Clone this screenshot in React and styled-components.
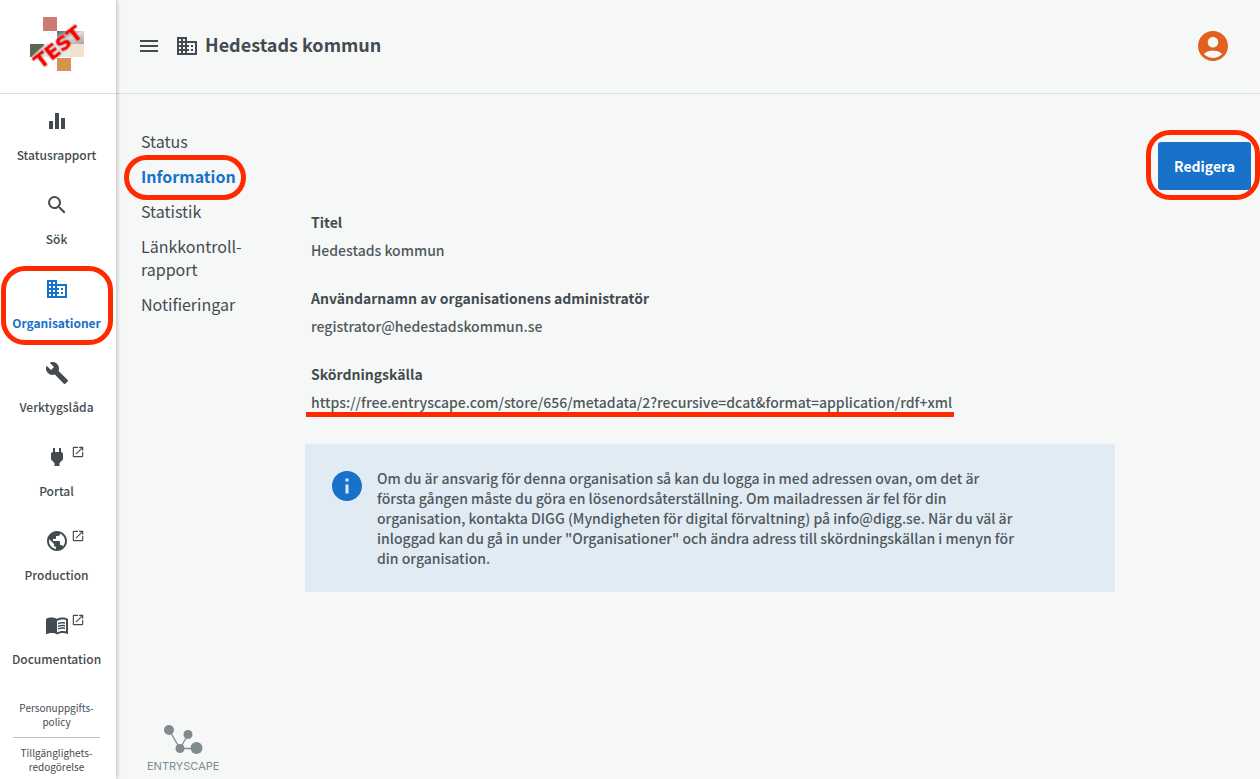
import React from 'react';
import styled, { createGlobalStyle } from 'styled-components';
import {
    MdAccountCircle,
    MdBuild,
    MdBusiness,
    MdEqualizer,
    MdInfo,
    MdMenu,
    MdMenuBook,
    MdOpenInNew,
    MdPower,
    MdPublic,
    MdSearch,
} from 'react-icons/md';

const textColor = '#444b50';
const softTextColor = '#51585c';
const blue = '#1872ca';
const red = '#ff2a00';

const GlobalStyle = createGlobalStyle`
    * {
        box-sizing: border-box;
    }

    body {
        margin: 0;
        background-color: #f6f8f7;
        color: ${textColor};
        font-family: 'Noto Sans CJK SC', 'Noto Sans', sans-serif;
        font-size: 14px;
        line-height: 20px;
    }

    a {
        color: inherit;
        text-decoration: none;
    }

    svg {
        display: block;
    }
`;

const Page = styled.div`
    display: flex;
    min-height: 100vh;
`;

const Sidebar = styled.aside`
    position: relative;
    flex: 0 0 116px;
    background-color: #fff;
    box-shadow: 0 0 5px rgba(0, 0, 0, .35);
`;

const LogoLink = styled.a`
    display: flex;
    justify-content: center;
    height: 94px;
    padding-top: 16px;
    border-bottom: 1px solid #dcdfdf;
`;

const Ring = styled.span`
    position: absolute;
    inset: ${props => props.inset};
    border: 5px solid ${red};
    border-radius: ${props => props.radius};
    pointer-events: none;
`;

const NavItem = styled.a`
    position: relative;
    display: flex;
    flex-direction: column;
    align-items: center;
    gap: 12px;
    height: 84px;
    padding: 15px 3px 0 0;
    font-size: 12px;
    font-weight: ${props => props.$active ? 'bold' : '500'};
    color: ${props => props.$active ? blue : 'inherit'};
    white-space: nowrap;
`;

const NavIcon = styled.span`
    position: relative;
`;

const ExternalMark = styled.span`
    position: absolute;
    top: 0;
    left: 26px;
`;

const Policies = styled.div`
    margin: 19px 16px 4px 13px;
    font-size: 10px;
    line-height: 14px;
    text-align: center;
`;

const PolicyLink = styled.a`
    display: block;

    & + & {
        margin-top: 8px;
        padding-top: 8px;
        border-top: 1px solid #bfc3c4;
    }
`;

const Main = styled.div`
    display: flex;
    flex: 1;
    flex-direction: column;
    min-width: 0;
`;

const Header = styled.header`
    display: flex;
    align-items: center;
    height: 94px;
    padding: 0 29px 2px 21px;
    border-bottom: 1px solid #dcdfdf;
`;

const IconButton = styled.button`
    padding: 0;
    border: 0;
    background: none;
    color: ${props => props.color || 'inherit'};
    cursor: pointer;
`;

const Heading = styled.h1`
    display: flex;
    flex: 1;
    align-items: center;
    gap: 6px;
    margin: 0 0 0 14px;
    font-size: 18px;
    line-height: 24px;

    span {
        padding-bottom: 4px;
    }
`;

const Body = styled.div`
    display: flex;
    align-items: flex-start;
    padding: 36px 9px 0 25px;
`;

const SubNav = styled.nav`
    display: flex;
    flex: 0 0 164px;
    flex-direction: column;
    align-items: flex-start;
    gap: 12px;
    font-size: 16px;
    line-height: 23px;
`;

const SubNavLink = styled.a`
    position: relative;
    color: ${props => props.$active ? blue : 'inherit'};
    font-weight: ${props => props.$active ? 'bold' : 'normal'};
`;

const Content = styled.main`
    flex: 1;
    min-width: 0;
    padding-top: 82px;
    font-weight: 500;
`;

const Details = styled.dl`
    display: flex;
    flex-direction: column;
    gap: 28px;
    margin: 0 0 32px;
    padding-left: 6px;
`;

const Label = styled.dt`
    font-weight: bold;
`;

const Value = styled.dd`
    position: relative;
    width: fit-content;
    margin: 8px 0 0;
    color: ${softTextColor};
`;

const Underline = styled.span`
    position: absolute;
    right: -2px;
    bottom: -5px;
    left: -5px;
    height: 5px;
    background-color: ${red};
`;

const InfoBox = styled.div`
    display: flex;
    gap: 12px;
    padding: 24px;
    background-color: #e1ebf4;
    color: ${softTextColor};

    svg {
        flex: none;
        color: ${blue};
    }

    p {
        max-width: 640px;
        margin: 0;
    }
`;

const Actions = styled.div`
    position: relative;
    margin: 12px 0 0 43px;
`;

const EditButton = styled.button`
    display: block;
    width: 93px;
    height: 48px;
    border: 0;
    border-radius: 3px;
    background-color: ${blue};
    color: #fff;
    font-family: inherit;
    font-size: 14px;
    font-weight: bold;
    cursor: pointer;
`;

const Footer = styled.footer`
    margin-top: auto;
    padding: 0 0 6px 31px;
`;

const Brand = styled.a`
    display: inline-flex;
    flex-direction: column;
    align-items: center;
    color: #7f8b8e;
    font-family: Inter, sans-serif;
    font-size: 11px;
    line-height: 14px;
`;

const navItems = [
    { label: 'Statusrapport', icon: MdEqualizer },
    { label: 'Sök', icon: MdSearch },
    { label: 'Organisationer', icon: MdBusiness, active: true },
    { label: 'Verktygslåda', icon: MdBuild },
    { label: 'Portal', icon: MdPower, external: true },
    { label: 'Production', icon: MdPublic, external: true },
    { label: 'Documentation', icon: MdMenuBook, external: true },
];

const TestLogo = () => (
    <svg width="60" height="58" viewBox="0 0 60 58" role="img" aria-label="TEST">
        <defs>
            <linearGradient id="grey" x1="0" y1="0" x2="1" y2="1">
                <stop offset="0" stopColor="#5f5a59" />
                <stop offset=".5" stopColor="#ddd" />
                <stop offset="1" stopColor="#aaa3a3" />
            </linearGradient>
            <linearGradient id="green" x1="0" y1="0" x2="1" y2="1">
                <stop offset=".5" stopColor="#5b684d" />
                <stop offset=".6" stopColor="#d8dad5" />
            </linearGradient>
            <filter id="glow" x="-20%" y="-40%" width="140%" height="180%">
                <feDropShadow dx="0" dy="0" stdDeviation="1" floodColor="#777" floodOpacity=".6" />
            </filter>
        </defs>
        <rect x="15" y="1" width="14" height="14" fill="#cc7b70" />
        <rect x="29" y="15" width="27" height="13" fill="url(#grey)" />
        <rect x="2" y="28" width="14" height="13" fill="url(#green)" />
        <rect x="16" y="28" width="26" height="13" fill="#e9e9e9" />
        <rect x="42" y="28" width="14" height="13" fill="#f4e0cf" />
        <rect x="29" y="42" width="14" height="13" fill="#d69351" />
        <text
            x="30"
            y="38"
            textAnchor="middle"
            transform="rotate(-38 30 31)"
            fill="#f90000"
            stroke="#f90000"
            strokeWidth=".3"
            filter="url(#glow)"
            fontFamily="DejaVu Sans, sans-serif"
            fontSize="20"
            fontWeight="bold"
        >
            TEST
        </text>
    </svg>
);

const EntryscapeLogo = () => (
    <svg width="40" height="35" viewBox="0 0 40 35" fill="#7f8b8e" aria-hidden="true">
        <path d="M6 6l11 18.500h17M17 24.500l8-14" fill="none" stroke="#7f8b8e" strokeWidth="1.300" />
        <circle cx="6" cy="6" r="5" />
        <circle cx="25" cy="10.500" r="4.500" />
        <circle cx="17" cy="24.500" r="4.500" />
        <circle cx="33.500" cy="24" r="6" />
    </svg>
);

export default function App() {
    return (
        <Page>
            <GlobalStyle />
            <Sidebar>
                <LogoLink href="#">
                    <TestLogo />
                </LogoLink>
                <nav>
                    {navItems.map(({ label, icon: Icon, active, external }) => (
                        <NavItem key={label} href="#" $active={active}>
                            <NavIcon>
                                <Icon size={24} />
                                {external && (
                                    <ExternalMark>
                                        <MdOpenInNew size={14} />
                                    </ExternalMark>
                                )}
                            </NavIcon>
                            {label}
                            {active && <Ring inset="4px 3px 1px 1px" radius="24px" />}
                        </NavItem>
                    ))}
                </nav>
                <Policies>
                    <PolicyLink href="#">Personuppgifts-<br />policy</PolicyLink>
                    <PolicyLink href="#">Tillgänglighets-<br />redogörelse</PolicyLink>
                </Policies>
            </Sidebar>
            <Main>
                <Header>
                    <IconButton aria-label="Meny">
                        <MdMenu size={24} />
                    </IconButton>
                    <Heading>
                        <MdBusiness size={24} />
                        <span>Hedestads kommun</span>
                    </Heading>
                    <IconButton color="#e1611f" aria-label="Konto">
                        <MdAccountCircle size={36} />
                    </IconButton>
                </Header>
                <Body>
                    <SubNav>
                        <SubNavLink href="#">Status</SubNavLink>
                        <SubNavLink href="#" $active>
                            Information
                            <Ring inset="-10px -10px -12px -17px" radius="23px" />
                        </SubNavLink>
                        <SubNavLink href="#">Statistik</SubNavLink>
                        <SubNavLink href="#">Länkkontroll-<br />rapport</SubNavLink>
                        <SubNavLink href="#">Notifieringar</SubNavLink>
                    </SubNav>
                    <Content>
                        <Details>
                            <div>
                                <Label>Titel</Label>
                                <Value>Hedestads kommun</Value>
                            </div>
                            <div>
                                <Label>Användarnamn av organisationens administratör</Label>
                                <Value>registrator@hedestadskommun.se</Value>
                            </div>
                            <div>
                                <Label>Skördningskälla</Label>
                                <Value>
                                    https://free.entryscape.com/store/656/metadata/2?recursive=dcat&amp;format=application/rdf+xml
                                    <Underline />
                                </Value>
                            </div>
                        </Details>
                        <InfoBox>
                            <MdInfo size={36} />
                            <p>
                                Om du är ansvarig för denna organisation så kan du logga in med adressen ovan, om det är
                                första gången måste du göra en lösenordsåterställning. Om mailadressen är fel för din
                                organisation, kontakta DIGG (Myndigheten för digital förvaltning) på info@digg.se. När du väl är
                                inloggad kan du gå in under "Organisationer" och ändra adress till skördningskällan i menyn för
                                din organisation.
                            </p>
                        </InfoBox>
                    </Content>
                    <Actions>
                        <EditButton>Redigera</EditButton>
                        <Ring inset="-12px -9px -10px -12px" radius="24px" />
                    </Actions>
                </Body>
                <Footer>
                    <Brand href="#">
                        <EntryscapeLogo />
                        ENTRYSCAPE
                    </Brand>
                </Footer>
            </Main>
        </Page>
    );
}
